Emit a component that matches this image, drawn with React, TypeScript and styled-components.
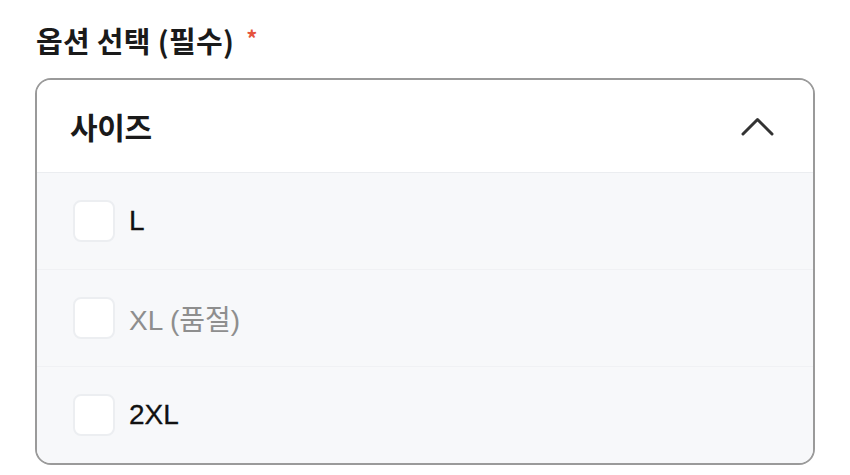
import * as React from "react";
import styled, { createGlobalStyle } from "styled-components";

const GlobalStyle = createGlobalStyle`
  body {
    margin: 0;
    background: #ffffff;
    font-family: "Noto Sans CJK KR", "Noto Sans", sans-serif;
  }
`;

const Page = styled.div`
  padding: 18px 35px 0 35px;
  width: 850px;
  box-sizing: border-box;
`;

const Title = styled.div`
  display: flex;
  align-items: center;
  gap: 12px;
  font-size: 29px;
  font-weight: 700;
  color: #1a1a1a;
  height: 44px;
  margin-bottom: 16px;
  padding-left: 1px;
  letter-spacing: 0.3px;
`;

const Required = styled.span`
  color: #e5533d;
  font-size: 22px;
  font-weight: 700;
  transform: translateY(-3px);
`;

const Box = styled.div`
  width: 780px;
  border: 2px solid #9a9a9a;
  border-radius: 16px;
  overflow: hidden;
  box-sizing: border-box;
`;

const Header = styled.div`
  display: flex;
  align-items: center;
  justify-content: space-between;
  height: 92px;
  padding: 0 39px 0 33px;
  background: #ffffff;
  border-bottom: 1px solid #ebedf0;
  font-size: 30px;
  font-weight: 700;
  color: #1a1a1a;
  letter-spacing: -0.3px;
`;

const Chevron = styled.svg`
  width: 33px;
  height: 22px;
`;

const Option = styled.label<{ $disabled?: boolean; $last?: boolean }>`
  display: flex;
  align-items: center;
  gap: 14px;
  height: 96px;
  padding: 0 36px;
  background: #f7f8fa;
  border-bottom: ${(p) => (p.$last ? "none" : "1px solid #f0f1f4")};
  font-family: "Liberation Sans", "Noto Sans CJK KR", sans-serif;
  font-size: 28px;
  font-weight: ${(p) => (p.$disabled ? 400 : 500)};
  color: ${(p) => (p.$disabled ? "#8e8e8e" : "#111111")};
  -webkit-text-stroke: ${(p) => (p.$disabled ? "0" : "0.3px")};
`;

const Check = styled.span`
  width: 38px;
  height: 38px;
  border: 2px solid #eceef1;
  border-radius: 8px;
  background: #ffffff;
  flex-shrink: 0;
`;

const options = [
  { label: "L" },
  { label: "XL (품절)", disabled: true },
  { label: "2XL" },
];

export default function App() {
  return (
    <>
      <GlobalStyle />
      <Page>
        <Title>
          옵션 선택 (필수)
          <Required>*</Required>
        </Title>
        <Box>
          <Header>
            사이즈
            <Chevron viewBox="0 0 33 22" fill="none">
              <path d="M2 19 L16.5 4.5 L31 19" stroke="#333" strokeWidth="3" strokeLinecap="round" strokeLinejoin="round" />
            </Chevron>
          </Header>
          {options.map((o, i) => (
            <Option key={o.label} $disabled={o.disabled} $last={i === options.length - 1}>
              <Check />
              {o.label}
            </Option>
          ))}
        </Box>
      </Page>
    </>
  );
}
